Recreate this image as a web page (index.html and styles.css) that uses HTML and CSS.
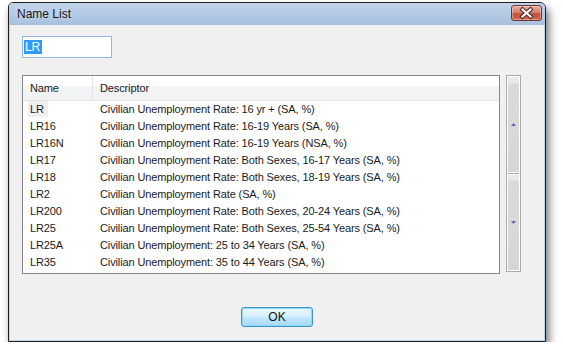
FILE: index.html
```html
<!DOCTYPE html>
<html lang="en">
<head>
    <meta charset="UTF-8">
    <title>Name List</title>
    <link rel="stylesheet" href="styles.css">
</head>
<body>
    <div class="window">
        <div class="titlebar">
            <span class="title">Name List</span>
            <div class="close">
                <svg width="31" height="16" viewBox="0 0 31 16">
                    <path d="M11.5 4.5 L19.5 11.5 M19.5 4.5 L11.5 11.5" stroke="#4b2b2b" stroke-width="4.2" stroke-linecap="square"/>
                    <path d="M11.5 4.5 L19.5 11.5 M19.5 4.5 L11.5 11.5" stroke="#fff" stroke-width="2.2" stroke-linecap="square"/>
                </svg>
            </div>
        </div>
        <div class="client">
            <div class="field"><span class="sel">LR</span></div>
            <div class="listarea">
                <div class="list">
                    <div class="head">
                        <div class="c1">Name</div>
                        <div class="c2">Descriptor</div>
                    </div>
                    <div class="row"><div class="c1"><span class="cur">LR</span></div><div class="c2">Civilian Unemployment Rate: 16 yr + (SA, %)</div></div>
                    <div class="row"><div class="c1">LR16</div><div class="c2">Civilian Unemployment Rate: 16-19 Years (SA, %)</div></div>
                    <div class="row"><div class="c1">LR16N</div><div class="c2">Civilian Unemployment Rate: 16-19 Years (NSA, %)</div></div>
                    <div class="row"><div class="c1">LR17</div><div class="c2">Civilian Unemployment Rate: Both Sexes, 16-17 Years (SA, %)</div></div>
                    <div class="row"><div class="c1">LR18</div><div class="c2">Civilian Unemployment Rate: Both Sexes, 18-19 Years (SA, %)</div></div>
                    <div class="row"><div class="c1">LR2</div><div class="c2">Civilian Unemployment Rate (SA, %)</div></div>
                    <div class="row"><div class="c1">LR200</div><div class="c2">Civilian Unemployment Rate: Both Sexes, 20-24 Years (SA, %)</div></div>
                    <div class="row"><div class="c1">LR25</div><div class="c2">Civilian Unemployment Rate: Both Sexes, 25-54 Years (SA, %)</div></div>
                    <div class="row"><div class="c1">LR25A</div><div class="c2">Civilian Unemployment: 25 to 34 Years (SA, %)</div></div>
                    <div class="row"><div class="c1">LR35</div><div class="c2">Civilian Unemployment: 35 to 44 Years (SA, %)</div></div>
                </div>
                <div class="scroll">
                    <div class="sbtn"><svg width="5" height="3" viewBox="0 0 5 3"><path d="M2.5 0 L5 3 L0 3 Z" fill="#5a64c4"/></svg></div>
                    <div class="sbtn"><svg width="5" height="3" viewBox="0 0 5 3"><path d="M0 0 L5 0 L2.5 3 Z" fill="#5a64c4"/></svg></div>
                </div>
            </div>
            <div class="actions">
                <div class="ok">OK</div>
            </div>
        </div>
    </div>
</body>
</html>
```

FILE: styles.css
```css
*{
    margin: 0;
    padding: 0;
    box-sizing: border-box;
}
body{
    background: #fff;
    font-family: "Liberation Sans", Arial, sans-serif;
    font-size: 11px;
    letter-spacing: -0.12px;
    color: #1b1b1b;
}
.window{
    margin: 2px 0 0 8px;
    width: 538px;
    height: 340px;
    border: 1px solid #1f1f1f;
    border-radius: 5px 6px 0 0;
    background: #f0f0f0;
    box-shadow: 3px 6px 9px rgba(0,0,0,.55);
    display: flex;
    flex-direction: column;
    overflow: hidden;
}
.titlebar{
    height: 22px;
    flex: none;
    display: flex;
    justify-content: space-between;
    align-items: flex-start;
    padding: 2px 3px 0 8px;
    background: linear-gradient(#c0d3ea, #a7c0dd);
}
.title{
    font-size: 12px;
    line-height: 18px;
    letter-spacing: 0;
    color: #151515;
    text-shadow: 0 0 6px rgba(255,255,255,.7);
}
.close{
    width: 31px;
    height: 16px;
    border: 1px solid #6d3434;
    border-radius: 3px;
    background: linear-gradient(#e8aa9c 0%, #d6806f 45%, #c5503d 55%, #c9654f 100%);
    box-shadow: inset 0 0 0 1px rgba(255,255,255,.35);
    position: relative;
}
.close svg{
    position: absolute;
    left: -1px;
    top: -1px;
}
.client{
    flex: 1;
    border: 1px solid #b8d6f0;
    border-top: none;
    padding: 11px 12px 0 12px;
    display: flex;
    flex-direction: column;
}
.field{
    width: 90px;
    height: 22px;
    background: #fff;
    border: 1px solid #8fbbe2;
    padding: 3px 0 0 1px;
}
.sel{
    display: inline-block;
    height: 14px;
    line-height: 14px;
    padding: 0 1px;
    background: #3399ff;
    color: #fff;
    border-right: 1px solid #c8701c;
    font-size: 12px;
}
.listarea{
    margin-top: 17px;
    display: flex;
    align-items: flex-start;
    gap: 6px;
}
.list{
    width: 478px;
    height: 199px;
    border: 1px solid #828790;
    background: #fff;
}
.head{
    display: flex;
    height: 25px;
    border-bottom: 1px solid #e3e4e6;
    background: linear-gradient(#fff 0, #fff 10px, #f3f4f5 10px, #f1f2f3 100%);
    line-height: 24px;
}
.head .c1{
    border-right: 1px solid #e3e4e6;
}
.row{
    display: flex;
    height: 17px;
    line-height: 17px;
}
.row:first-of-type{
    margin-top: 1px;
}
.c1{
    width: 70px;
    padding-left: 7px;
    flex: none;
}
.c2{
    padding-left: 7px;
    white-space: nowrap;
}
.cur{
    display: inline-block;
    width: 20px;
    height: 16px;
    line-height: 16px;
    margin-left: -2px;
    padding-left: 2px;
    background: #efefef;
}
.scroll{
    width: 15px;
    height: 197px;
    border: 1px solid #aaaaaa;
    background: #fff;
    display: flex;
    flex-direction: column;
}
.sbtn{
    flex: 1;
    margin: 1px;
    background: linear-gradient(#eaeaea 0, #eaeaea 6px, #dadada 7px, #d6d6d6 100%);
    display: flex;
    justify-content: center;
    align-items: center;
}
.sbtn + .sbtn{
    border-top: 1px solid #aaaaaa;
    margin-top: 0;
    padding-top: 1px;
    background: linear-gradient(#fff 0, #fff 1px, #eaeaea 1px, #eaeaea 6px, #dadada 7px, #d6d6d6 100%);
}
.actions{
    margin-top: 33px;
    display: flex;
    justify-content: center;
}
.ok{
    width: 72px;
    height: 20px;
    border: 1px solid #3c94cf;
    border-radius: 3px;
    background: linear-gradient(#eaf6fd 0%, #d9effc 45%, #bee6fd 55%, #a7d9f5 100%);
    box-shadow: inset 0 0 0 1px #8fd8f8;
    text-align: center;
    line-height: 18px;
    font-size: 12px;
    letter-spacing: 0;
    color: #111;
}
```
